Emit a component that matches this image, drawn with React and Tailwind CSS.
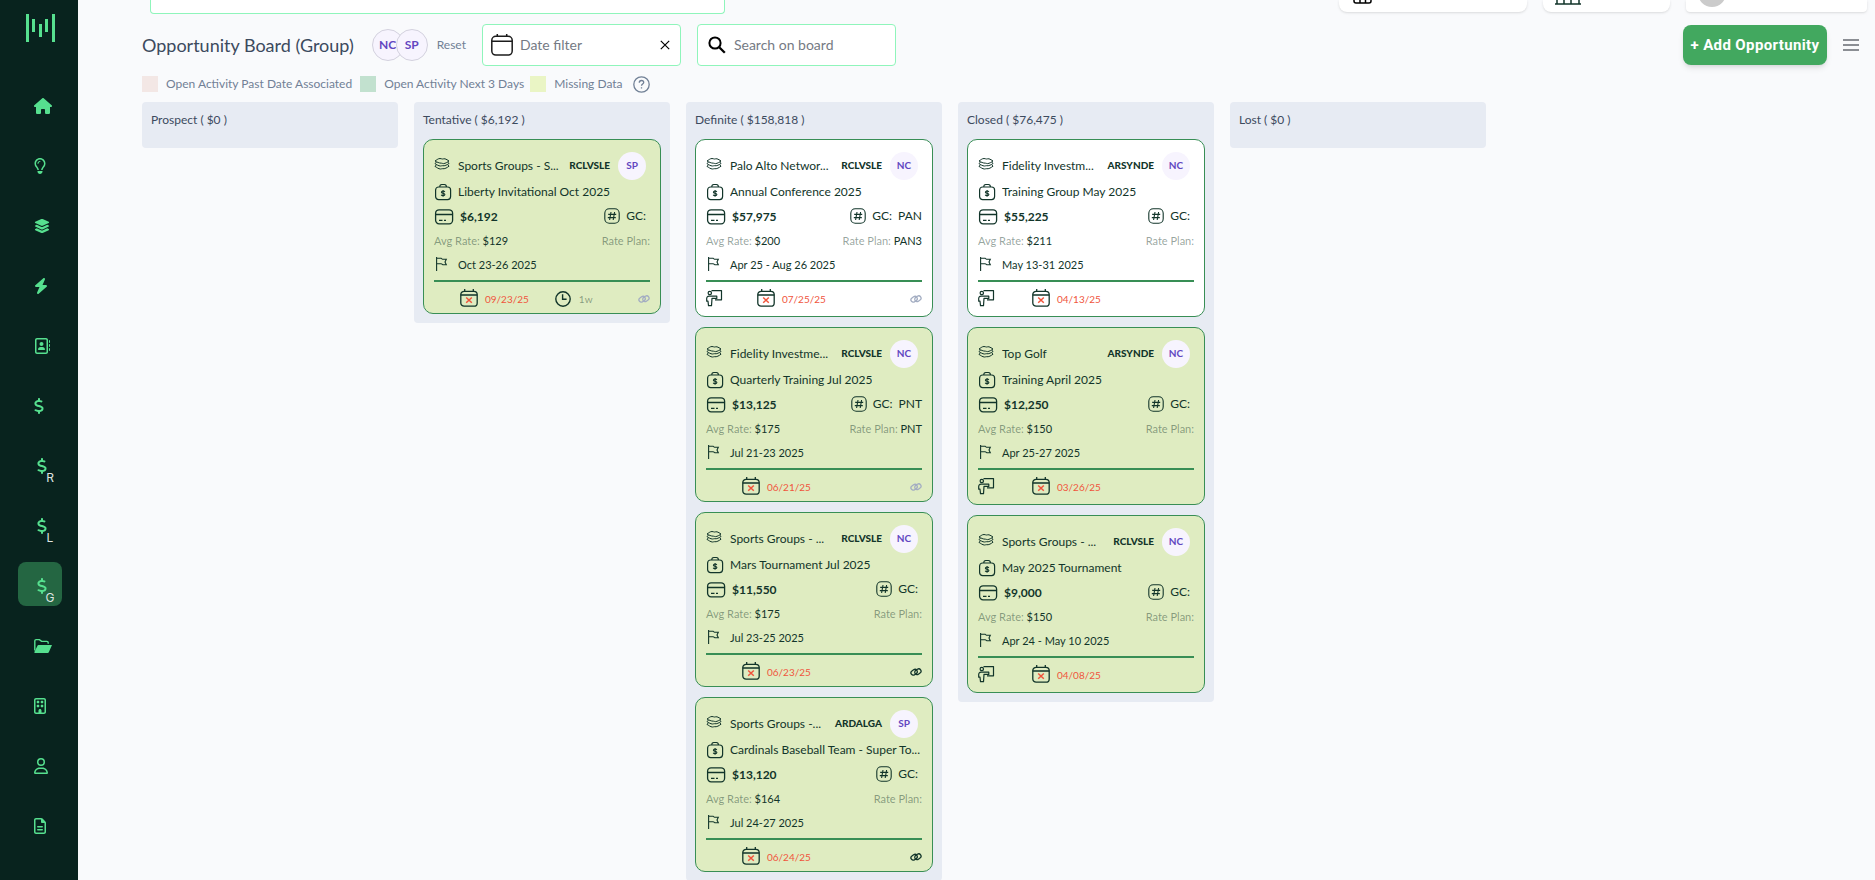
import React from "react";
import {
  FaHouse,
  FaRegLightbulb,
  FaLayerGroup,
  FaBolt,
  FaRegAddressBook,
  FaDollarSign,
  FaRegBuilding,
  FaRegUser,
  FaRegFileLines,
} from "react-icons/fa6";

const FolderIcon = () => (
  <svg width="18" height="16" viewBox="0 0 18 16" fill="none">
    <path d="M.8 12.5V2.8A1.3 1.3 0 0 1 2.1 1.6h3.3l2.2 1.8h5.3a1.3 1.3 0 0 1 1.3 1.3v1.1" stroke="currentColor" strokeWidth="1.4" />
    <path d="M4.6 7H18l-3.2 7.2a1.2 1.2 0 0 1-1.1.8H1.2c-.6 0-1-.6-.8-1.1L3.6 7.6a1 1 0 0 1 1-.6z" fill="currentColor" />
  </svg>
);

const NAV = [
  { name: "Home", icon: <FaHouse className="w-[18px] h-4" /> },
  { name: "Ideas", icon: <FaRegLightbulb className="w-3 h-4" /> },
  { name: "Layers", icon: <FaLayerGroup className="w-4 h-4" /> },
  { name: "Activity", icon: <FaBolt className="w-[14px] h-4" /> },
  { name: "Contacts", icon: <FaRegAddressBook className="w-4 h-4" /> },
  { name: "Revenue", icon: <FaDollarSign className="w-[10px] h-4" /> },
  { name: "Revenue R", icon: <FaDollarSign className="w-[10px] h-4" />, letter: "R" },
  { name: "Revenue L", icon: <FaDollarSign className="w-[10px] h-4" />, letter: "L" },
  { name: "Revenue G", icon: <FaDollarSign className="w-[10px] h-4" />, letter: "G", active: true },
  { name: "Files", icon: <FolderIcon /> },
  { name: "Properties", icon: <FaRegBuilding className="w-3 h-4" /> },
  { name: "Users", icon: <FaRegUser className="w-[14px] h-4" /> },
  { name: "Reports", icon: <FaRegFileLines className="w-3 h-4" /> },
];

const COLUMNS = [
  { title: "Prospect ( $0 )", cards: [] },
  {
    title: "Tentative ( $6,192 )",
    cards: [
      { account: "Sports Groups - S...", code: "RCLVSLE", owner: "SP", name: "Liberty Invitational Oct 2025", amount: "$6,192", gc: "", rate: "$129", plan: "", dates: "Oct 23-26 2025", due: "09/23/25", age: "1w", link: "muted", missing: true },
    ],
  },
  {
    title: "Definite ( $158,818 )",
    cards: [
      { account: "Palo Alto Networ...", code: "RCLVSLE", owner: "NC", name: "Annual Conference 2025", amount: "$57,975", gc: "PAN", rate: "$200", plan: "PAN3", dates: "Apr 25 - Aug 26 2025", due: "07/25/25", meeting: true, link: "muted" },
      { account: "Fidelity Investme...", code: "RCLVSLE", owner: "NC", name: "Quarterly Training Jul 2025", amount: "$13,125", gc: "PNT", rate: "$175", plan: "PNT", dates: "Jul 21-23 2025", due: "06/21/25", link: "muted", missing: true },
      { account: "Sports Groups - ...", code: "RCLVSLE", owner: "NC", name: "Mars Tournament Jul 2025", amount: "$11,550", gc: "", rate: "$175", plan: "", dates: "Jul 23-25 2025", due: "06/23/25", link: "dark", missing: true },
      { account: "Sports Groups -...", code: "ARDALGA", owner: "SP", name: "Cardinals Baseball Team - Super To...", amount: "$13,120", gc: "", rate: "$164", plan: "", dates: "Jul 24-27 2025", due: "06/24/25", link: "dark", missing: true },
    ],
  },
  {
    title: "Closed ( $76,475 )",
    cards: [
      { account: "Fidelity Investm...", code: "ARSYNDE", owner: "NC", name: "Training Group May 2025", amount: "$55,225", gc: "", rate: "$211", plan: "", dates: "May 13-31 2025", due: "04/13/25", meeting: true },
      { account: "Top Golf", code: "ARSYNDE", owner: "NC", name: "Training April 2025", amount: "$12,250", gc: "", rate: "$150", plan: "", dates: "Apr 25-27 2025", due: "03/26/25", meeting: true, missing: true },
      { account: "Sports Groups - ...", code: "RCLVSLE", owner: "NC", name: "May 2025 Tournament", amount: "$9,000", gc: "", rate: "$150", plan: "", dates: "Apr 24 - May 10 2025", due: "04/08/25", meeting: true, missing: true },
    ],
  },
  { title: "Lost ( $0 )", cards: [] },
];

const LayersIcon = () => (
  <svg width="16" height="14" viewBox="0 0 16 14" fill="none" stroke="currentColor" strokeWidth="1" strokeLinejoin="round">
    <path d="M1 4C2.500 3.200 4 1.500 6 1.500c1.200 0 1.500.5 2.500.5s1.500-.4 2.500-.2c1.500.3 2.500 1.400 4 2.200-1.500.9-3.500 2.600-5.500 2.600-1 0-1.200-.4-2-.4C5 6.200 3 5 1 4z" />
    <path d="M2.500 5L1 6.700c1.500.8 3.500 2.300 5.500 2.300.8 0 1-.3 1.800-.3 2.500.5 5-1 6.700-2.200L13.700 5" />
    <path d="M2.500 7.700L1 9.400c1.500.8 3.500 2.600 5.500 2.600.8 0 1-.3 1.800-.3 2.500.5 5-1.200 6.700-2.500l-1.300-1.500" />
  </svg>
);

const BriefcaseIcon = () => (
  <svg width="18" height="18" viewBox="0 0 18 18" fill="none" stroke="currentColor" strokeWidth="1.2">
    <rect x="1.600" y="4" width="15" height="12.600" rx="3" />
    <path d="M5.800 4c0-1.800.6-2.500 2-2.500h2.600c1.400 0 2 .7 2 2.500" />
    <path d="M10.800 8.900c-.3-.6-.9-.9-1.700-.9-1 0-1.700.5-1.700 1.200 0 1.700 3.500.7 3.500 2.400 0 .8-.7 1.200-1.800 1.200-.9 0-1.600-.3-1.900-1M9.100 7.100v6.600" strokeWidth="1.100" />
  </svg>
);

const CardIcon = () => (
  <svg width="20" height="18" viewBox="0 0 20 18" fill="none" stroke="currentColor" strokeWidth="1.300">
    <rect x="1.600" y="1.800" width="17" height="14" rx="3.500" />
    <path d="M1.600 6.500h17M5 12.400h3.500M10 12.400h2" />
  </svg>
);

const HashIcon = () => (
  <svg width="16" height="16" viewBox="0 0 16 16" fill="none" stroke="currentColor" strokeWidth="1.100">
    <rect x=".8" y=".8" width="14.400" height="14.400" rx="4.500" />
    <path d="M7 4L5.600 12M10.600 4L9.200 12M4.200 6.400h8M3.800 9.600h8" />
  </svg>
);

const FlagIcon = () => (
  <svg width="14" height="16" viewBox="0 0 14 16" fill="none" stroke="currentColor" strokeWidth="1.100">
    <path d="M2.600 1v14M2.600 2.300h4.600c.6 0 .6 1 1.300 1H12.300L11 6l1.300 2.700H8.800c-.8 0-.8-1-1.600-1H2.600" />
  </svg>
);

const DueIcon = () => (
  <svg width="18" height="18" viewBox="0 0 18 18" fill="none" stroke="currentColor" strokeWidth="1.300">
    <rect x=".8" y="2.300" width="16.400" height="14.900" rx="3.300" />
    <path d="M.8 6h16.400M4.700 0v2.300M13.300 0v2.300" />
    <path d="M6.200 8.500l5.600 5.200M11.800 8.500l-5.600 5.200" stroke="#f0553c" strokeWidth="1.500" />
  </svg>
);

const MeetingIcon = () => (
  <svg width="17" height="18" viewBox="0 0 17 18" fill="none" stroke="currentColor" strokeWidth="1.200" strokeLinejoin="round">
    <circle cx="3.800" cy="4" r="1.700" />
    <path d="M5.500 1.600h10v9.200H9" />
    <path d="M10.800 7.200H3C1.500 7.200.7 8.100.7 9.600v2.600h1.300l.5 4.500h3l.5-7.300h4.800z" />
  </svg>
);

const ClockIcon = () => (
  <svg width="16" height="16" viewBox="0 0 16 16" fill="none" stroke="currentColor" strokeWidth="1.400">
    <circle cx="8" cy="8" r="7.200" />
    <path d="M7.600 3.200v5h4" />
  </svg>
);

const LinkIcon = ({ className }) => (
  <svg className={className} width="12" height="10" viewBox="0 0 12 10" fill="none" stroke="currentColor" strokeWidth="1.300">
    <rect x=".8" y="3" width="6.600" height="4.600" rx="2.300" transform="rotate(-35 4.100 5.300)" />
    <rect x="4.600" y="2.400" width="6.600" height="4.600" rx="2.300" transform="rotate(-35 7.900 4.700)" />
  </svg>
);

function footerStart(card) {
  if (card.meeting) return card.link ? "w-[51px]" : "w-[54px]";
  return card.age ? "w-[26px]" : "w-9";
}

function OpportunityCard({ card }) {
  return (
    <article
      className={`rounded-[10px] border border-[#388e55] px-[10px] pt-3 text-xs text-[#12352a] ${
        card.missing ? "bg-[#dfecc1]" : "bg-white"
      } ${card.meeting ? "pb-[9px]" : "pb-[6px]"}`}
    >
      <div className="flex h-7 items-center pr-1">
        <span className="w-6 pb-1"><LayersIcon /></span>
        <span className="flex-1 truncate">{card.account}</span>
        <span className="mr-2 text-[10px] font-black">{card.code}</span>
        <span className="flex h-7 w-7 items-center justify-center rounded-full bg-[#f7f4fe] text-[10px] font-bold text-[#6246c1]">
          {card.owner}
        </span>
      </div>
      <div className="flex h-6 items-center">
        <span className="w-6 shrink-0"><BriefcaseIcon /></span>
        <span className="truncate">{card.name}</span>
      </div>
      <div className="flex h-[26px] items-center">
        <CardIcon />
        <span className="ml-[6px] flex-1 font-bold">{card.amount}</span>
        <span className="flex items-center pb-[2px]">
          <HashIcon />
          <span className={card.gc ? "ml-[6px] mr-[6px]" : "ml-[6px] mr-1"}>GC:</span>
          <span>{card.gc}</span>
        </span>
      </div>
      <div className="flex h-[22px] items-center justify-between text-[11px]">
        <span><span className="text-[#12352a]/45">Avg Rate:</span> {card.rate}</span>
        <span><span className="text-[#12352a]/45">Rate Plan:</span> {card.plan}</span>
      </div>
      <div className="flex h-7 items-center pb-[2px] text-[11px]">
        <span className="w-6 pb-[2px]"><FlagIcon /></span>
        <span>{card.dates}</span>
      </div>
      <div className="h-[2px] bg-[#388e55]" />
      <div className="flex h-[25px] items-end text-[10px]">
        <span className={`shrink-0 ${footerStart(card)}`}>{card.meeting && <MeetingIcon />}</span>
        <DueIcon />
        <span className="ml-[7px] pb-px text-[#f0553c]">{card.due}</span>
        {card.age && (
          <span className="ml-[26px] flex items-end gap-2">
            <ClockIcon />
            <span className="pb-px text-[#12352a]/45">{card.age}</span>
          </span>
        )}
        {card.link && (
          <a href="#link" aria-label="Open link" className="ml-auto pb-[3px]">
            <LinkIcon className={card.link === "dark" ? "text-[#12352a]" : "text-[#a3adc2]"} />
          </a>
        )}
      </div>
    </article>
  );
}

function Sidebar() {
  return (
    <nav className="flex w-[78px] shrink-0 flex-col bg-[#08231e] text-[#56e08f]">
      <svg className="ml-[26px] mt-[14px] shrink-0" width="29" height="28" viewBox="0 0 29 28" fill="currentColor">
        <rect width="3" height="28" />
        <rect x="6" y="5" width="3" height="13" />
        <rect x="13" y="10" width="3" height="13" />
        <rect x="19" y="5" width="3" height="13" />
        <rect x="26" width="3" height="28" />
      </svg>
      <div className="mt-10 flex flex-col gap-4 pl-[18px]">
        {NAV.map((item) => (
          <a
            key={item.name}
            href="#nav"
            aria-label={item.name}
            className={`relative flex h-11 w-11 items-center rounded-lg pt-1 ${item.active ? "bg-[#246642]" : ""} ${
              item.letter ? "pl-[19px]" : "pl-4"
            }`}
          >
            {item.icon}
            {item.letter && (
              <span className="absolute bottom-0 right-[7px] w-[10px] text-center font-['Inter'] text-xs text-[#dfe5e2]">
                {item.letter}
              </span>
            )}
          </a>
        ))}
      </div>
    </nav>
  );
}

function HeaderEdge() {
  return (
    <div className="flex h-[14px] pl-2 pr-2">
      <div className="w-[575px] rounded-b border border-t-0 border-[#8ff5bb] bg-white" />
      <div className="ml-auto flex gap-4">
        <div className="h-3 w-[188px] rounded-b-lg bg-white pl-[14px] shadow-sm">
          <svg width="19" height="4" viewBox="0 0 19 4" fill="none" stroke="#000" strokeWidth="1.500">
            <path d="M1 0v1a2 2 0 0 0 2 2h13a2 2 0 0 0 2-2V0M7 0v3M12.500 0v3" />
          </svg>
        </div>
        <div className="h-3 w-[127px] rounded-b-lg bg-white pl-3 shadow-sm">
          <svg width="26" height="5" viewBox="0 0 26 5" fill="none" stroke="#12352a" strokeWidth="1.500">
            <path d="M0 4h26M2 0v4M9 0v4M16 0v4M24 0v4" />
          </svg>
        </div>
        <div className="h-3 w-[181px] rounded-b bg-white pl-3 shadow-sm">
          <div className="h-[7px] w-7 overflow-hidden">
            <div className="-mt-[21px] h-7 w-7 rounded-full bg-[#cbcbcb]" />
          </div>
        </div>
      </div>
    </div>
  );
}

function Toolbar() {
  const [date, setDate] = React.useState("");
  const [search, setSearch] = React.useState("");

  return (
    <div className="mt-[10px] flex h-[42px] items-center">
      <h1 className="text-lg text-[#3c4a5e]">Opportunity Board (Group)</h1>
      <div className="ml-[18px] flex">
        <button className="h-8 w-8 rounded-full border border-[#d3d1de] bg-[#f7f4fe] text-xs font-bold text-[#6246c1]">NC</button>
        <button className="-ml-2 h-8 w-8 rounded-full border border-[#d3d1de] bg-[#f7f4fe] text-xs font-bold text-[#6246c1]">SP</button>
      </div>
      <button className="ml-[9px] text-xs text-[#718096]">Reset</button>
      <div className="ml-4 flex h-[42px] w-[199px] items-center rounded border border-[#8ff5bb] bg-white pl-2 pr-[10px]">
        <svg className="shrink-0" width="22" height="22" viewBox="0 0 22 22" fill="none" stroke="#1c1c1c" strokeWidth="1.500">
          <rect x=".8" y="2.300" width="20.400" height="18.800" rx="4" />
          <path d="M.8 7.200h20.400M6.300 0v2.300M15.700 0v2.300" />
        </svg>
        <input
          aria-label="Date filter"
          placeholder="Date filter"
          value={date}
          onChange={(e) => setDate(e.target.value)}
          className="ml-[7px] w-full min-w-0 text-sm outline-none placeholder:text-[#757a84]"
        />
        <button aria-label="Clear date" onClick={() => setDate("")}>
          <svg width="10" height="10" viewBox="0 0 10 10" stroke="#000" strokeWidth="1.200">
            <path d="M.8.8l8.400 8.400M9.200.8L.8 9.200" />
          </svg>
        </button>
      </div>
      <div className="ml-4 flex h-[42px] w-[199px] items-center rounded border border-[#8ff5bb] bg-white pl-[10px] pr-2">
        <svg className="shrink-0" width="18" height="18" viewBox="0 0 18 18" fill="none" stroke="#000" strokeWidth="2">
          <circle cx="7" cy="7" r="5.600" />
          <path d="M11.200 11.200l5.600 5.600" strokeWidth="2.300" />
        </svg>
        <input
          aria-label="Search on board"
          placeholder="Search on board"
          value={search}
          onChange={(e) => setSearch(e.target.value)}
          className="ml-2 w-full min-w-0 text-sm outline-none placeholder:text-[#757a84]"
        />
      </div>
      <button className="ml-auto h-10 w-36 rounded-lg bg-[#42a85f] font-['Roboto'] text-[15px] font-bold tracking-wide text-white shadow-md">
        + Add Opportunity
      </button>
      <button aria-label="Menu" className="ml-4 mr-4">
        <svg width="16" height="12" viewBox="0 0 16 12" fill="#8b8e94">
          <rect width="16" height="2" />
          <rect y="5" width="16" height="2" />
          <rect y="10" width="16" height="2" />
        </svg>
      </button>
    </div>
  );
}

function Legend() {
  return (
    <div className="mt-[10px] flex h-4 items-center text-xs text-[#718096]">
      <span className="mr-2 h-4 w-4 bg-[#f3e7e5]" />
      <span className="mr-2">Open Activity Past Date Associated</span>
      <span className="mr-2 h-4 w-4 bg-[#c2e1cf]" />
      <span className="mr-[6px]">Open Activity Next 3 Days</span>
      <span className="mr-2 h-4 w-4 bg-[#eaf5c5]" />
      <span className="mr-[10px]">Missing Data</span>
      <button aria-label="Help">
        <svg width="17" height="17" viewBox="0 0 17 17" fill="none" stroke="currentColor" strokeWidth="1.300">
          <circle cx="8.500" cy="8.500" r="7.700" />
          <path d="M6.300 6.700c0-1.400 1-2.200 2.200-2.200s2.200.8 2.200 2c0 1.500-2.200 1.700-2.200 3.300M8.500 11.300v1.300" />
        </svg>
      </button>
    </div>
  );
}

export default function App() {
  return (
    <div className="flex h-screen overflow-hidden bg-[#f9fafc] font-['Lato',sans-serif]">
      <Sidebar />
      <main className="min-w-0 flex-1">
        <div className="pl-16">
          <HeaderEdge />
          <Toolbar />
          <Legend />
          <div className="mt-[10px] flex items-start gap-4">
            {COLUMNS.map((column) => (
              <section key={column.title} className="w-64 shrink-0 rounded bg-[#e7ebf3] px-[9px] pb-[9px]">
                <h2 className="flex h-[37px] items-center pb-[2px] text-xs text-[#3c4a5e]">{column.title}</h2>
                <div className="flex flex-col gap-[10px]">
                  {column.cards.map((card, i) => (
                    <OpportunityCard key={i} card={card} />
                  ))}
                </div>
              </section>
            ))}
          </div>
        </div>
      </main>
    </div>
  );
}
